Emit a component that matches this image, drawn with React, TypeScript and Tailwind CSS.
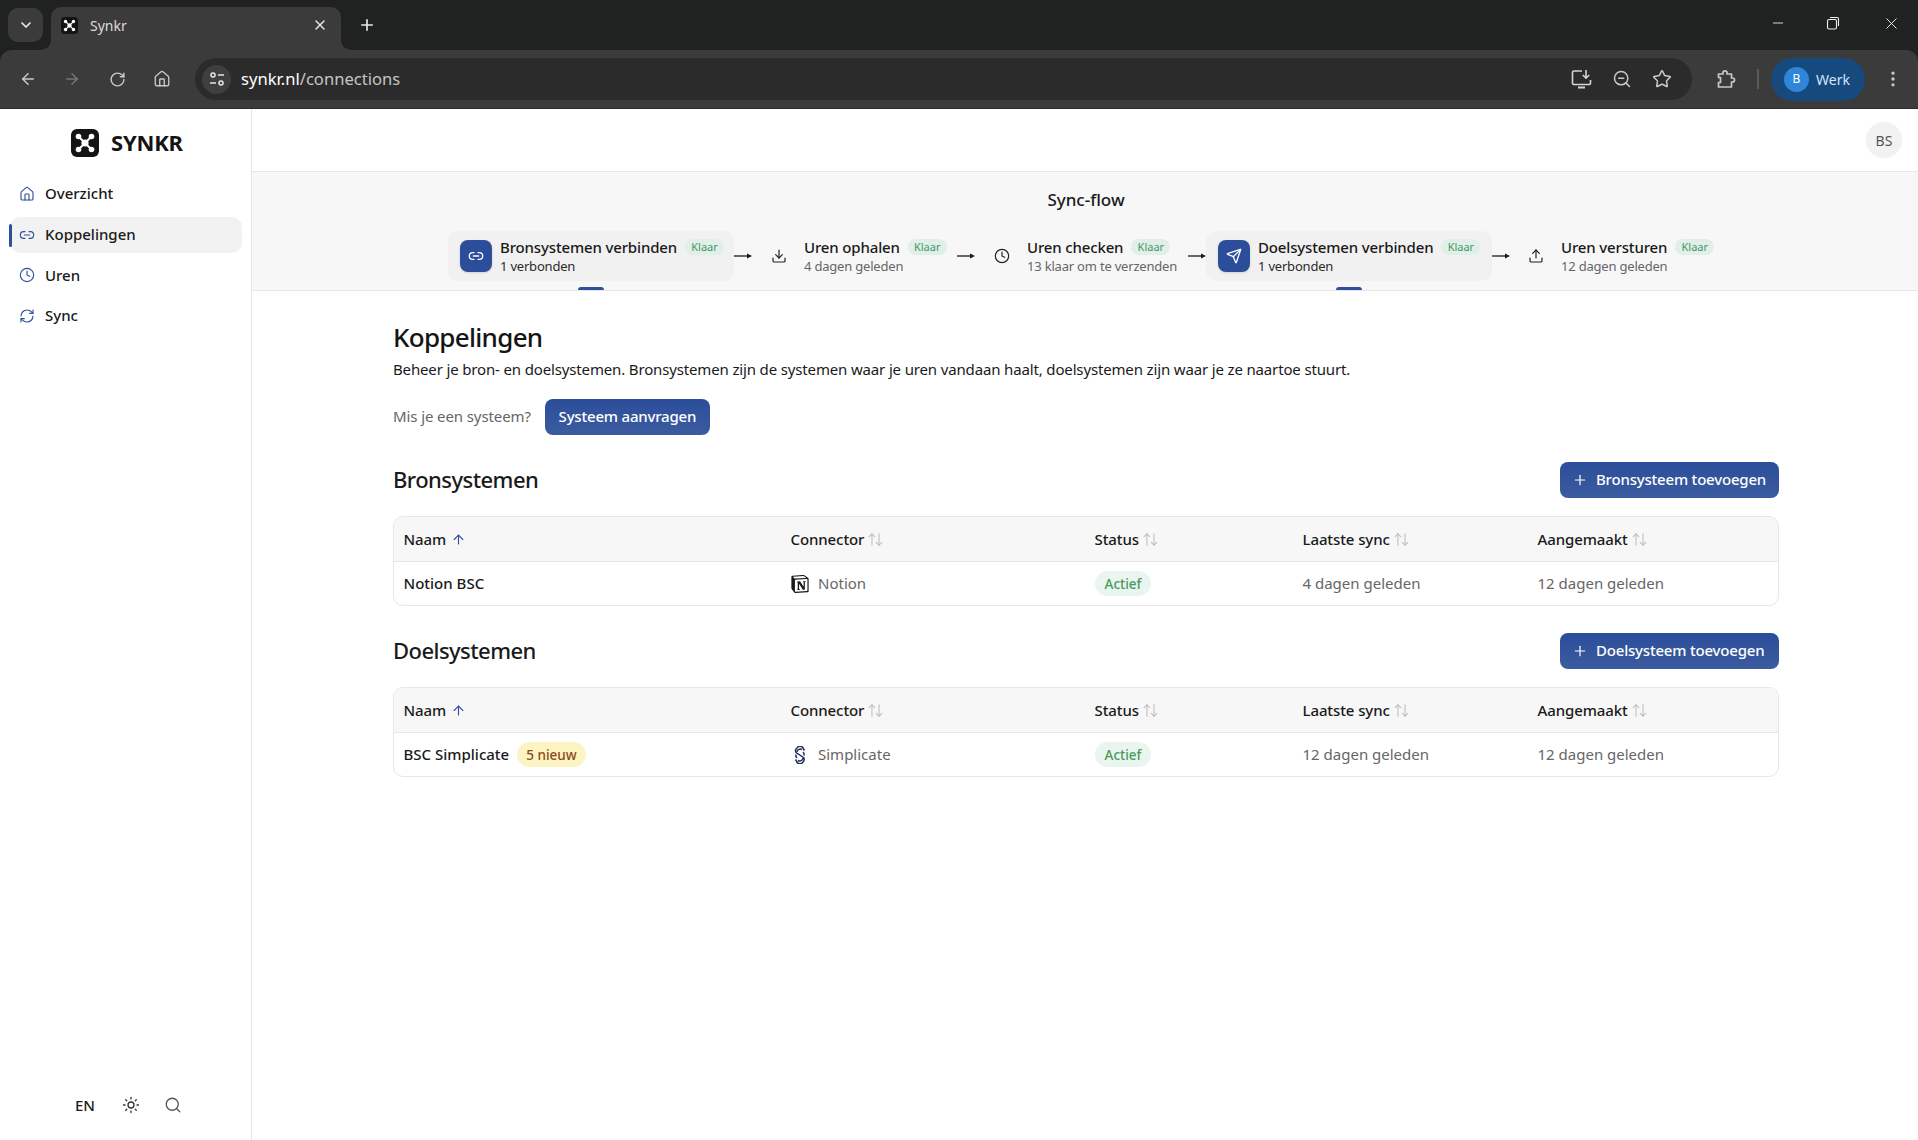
import React from "react";
import { ArrowUp, ArrowUpDown, Clock, Download, House, Link2, Plus, RefreshCw, Search, Send, Sun, Upload, X, ChevronDown, ArrowLeft, ArrowRight, RotateCw, Star, ZoomOut, EllipsisVertical, Minus } from "lucide-react";
import { SiNotion } from "react-icons/si";

function Logo({ size }: { size: number }) {
  return (
    <svg width={size} height={size} viewBox="0 0 28 28">
      <rect width="28" height="28" rx="6" fill="#141414" />
      <g stroke="#fff" strokeWidth="2">
        <line x1="8" y1="8" x2="20" y2="20" />
        <line x1="20" y1="8" x2="8" y2="20" />
      </g>
      <circle cx="7.5" cy="7.5" r="2.8" fill="#fff" />
      <circle cx="20.5" cy="7.5" r="2.8" fill="#fff" />
      <circle cx="7.5" cy="20.5" r="2.8" fill="#fff" />
      <circle cx="20.5" cy="20.5" r="2.8" fill="#fff" />
      <circle cx="14" cy="14" r="3.6" fill="#fff" />
    </svg>
  );
}

function TabFlare({ flip }: { flip?: boolean }) {
  return (
    <svg width="10" height="10" viewBox="0 0 10 10" className={flip ? "-scale-x-100" : ""}>
      <path d="M10 0 V10 H0 A10 10 0 0 0 10 0Z" fill="#3b3b3b" />
    </svg>
  );
}

function ChromeBar() {
  return (
    <div className="bg-[#202221] text-[#e8e8e8] shrink-0">
      <div className="h-[50px] flex items-end relative">
        <div className="w-[35px] h-[34px] ml-2 mb-2 rounded-[10px] bg-[#3b3b3b] flex items-center justify-center">
          <ChevronDown size={16} strokeWidth={2.6} />
        </div>
        <div className="flex items-end ml-[-2px]">
          <TabFlare />
          <div className="w-[290px] h-[43px] bg-[#3b3b3b] rounded-t-[10px] flex items-center pl-[10px] pr-[13px] pb-[7px]">
            <Logo size={17} />
            <span className="ml-3 text-[14px] text-[#dcdcdc]">Synkr</span>
            <X size={16} strokeWidth={2.2} className="ml-auto" />
          </div>
          <TabFlare flip />
        </div>
        <div className="ml-[7px] h-[34px] mb-2 flex items-center">
          <Plus size={18} strokeWidth={2.2} />
        </div>
        <div className="ml-auto flex items-center h-[46px] self-start text-[#f0f0f0]">
          <Minus size={16} strokeWidth={1.3} className="mr-[40px]" />
          <svg width="14" height="14" viewBox="0 0 14 14" fill="none" stroke="currentColor" strokeWidth="1.1" className="mr-[42px]">
            <rect x="1.5" y="3.5" width="9" height="9.5" rx="1.5" />
            <path d="M4 1.5 H11 A1.5 1.5 0 0 1 12.5 3 V10" />
          </svg>
          <X size={19} strokeWidth={1.2} className="mr-[17px]" />
        </div>
      </div>
      <div className="h-[59px] bg-[#3b3b3b] rounded-t-[12px] border-b border-[#2a2a2a] flex items-center pl-[19px] text-[#c9c9c9]">
        <ArrowLeft size={18} strokeWidth={2} />
        <ArrowRight size={18} strokeWidth={2} className="ml-[26px] text-[#7d7178]" />
        <RotateCw size={17} strokeWidth={2} className="ml-[28px]" />
        <House size={18} strokeWidth={1.8} className="ml-[27px]" />
        <div className="ml-[24px] w-[1497px] h-[42px] rounded-full bg-[#2b2b2b] flex items-center pl-[7px] pr-[20px]">
          <div className="w-[29px] h-[29px] rounded-full bg-[#3f3f3f] flex items-center justify-center">
            <svg width="16" height="16" viewBox="0 0 16 16" fill="none" stroke="#e8e8e8" strokeWidth="1.5">
              <circle cx="4" cy="4" r="2" />
              <line x1="9" y1="4" x2="15" y2="4" />
              <line x1="1" y1="12" x2="7" y2="12" />
              <circle cx="12" cy="12" r="2" />
            </svg>
          </div>
          <span className="ml-[10px] text-[16.6px] text-[#c4c4c4]">
            <span className="text-white">synkr.nl</span>/connections
          </span>
          <div className="ml-auto flex items-center gap-[20px]">
            <svg width="21" height="20" viewBox="0 0 21 20" fill="none" stroke="#d4d4d4" strokeWidth="1.6">
              <path d="M11 2 H3 A1.5 1.5 0 0 0 1.5 3.5 V14 A1.5 1.5 0 0 0 3 15.5 H18 A1.5 1.5 0 0 0 19.5 14 V11" />
              <path d="M7 18.5 H14" strokeWidth="2" />
              <path d="M15 1 V9 M11.8 6 L15 9.2 L18.2 6" />
            </svg>
            <ZoomOut size={20} strokeWidth={1.8} />
            <Star size={20} strokeWidth={1.8} />
          </div>
        </div>
        <svg width="20" height="20" viewBox="0 0 20 20" fill="none" stroke="#c9c9c9" strokeWidth="1.7" strokeLinejoin="round" className="ml-[24px]">
          <path d="M2.5 5 H7 V3.8 A2 2 0 0 1 11 3.8 V5 H15.5 V9 H16.5 A2 2 0 0 1 16.5 13 H15.5 V18 H2.5 V13.5 H4.5 V8.5 H2.5 Z" />
        </svg>
        <div className="ml-[21px] w-[2px] h-[20px] bg-[#5a5a5a]" />
        <div className="ml-[12px] w-[94px] h-[43px] rounded-full bg-[#16497e] flex items-center pl-[13px]">
          <div className="w-[25px] h-[25px] rounded-full bg-[#2f86d8] flex items-center justify-center text-[12px] text-white">B</div>
          <span className="ml-[7px] text-[14px] text-[#cfe6fb]">Werk</span>
        </div>
        <EllipsisVertical size={20} strokeWidth={2} className="ml-[18px]" />
      </div>
    </div>
  );
}

function NavItem({ icon, label, active }: { icon: React.ReactNode; label: string; active?: boolean }) {
  return (
    <div className={`relative mx-[10px] w-[232px] h-9 rounded-[10px] flex items-center pl-[9px] gap-[10px] text-[15px] font-medium text-[#1a1a1a] ${active ? "bg-[#f2f2f2]" : ""}`}>
      {active && <div className="absolute left-[-1px] top-[7px] w-[2.5px] h-[23px] rounded-full bg-[#2f4f9b]" />}
      <span className="text-[#2f4f9b] flex">{icon}</span>
      <span className="pb-[1px]">{label}</span>
    </div>
  );
}

function Sidebar() {
  return (
    <aside className="w-[252px] shrink-0 border-r border-[#e6e6e6] flex flex-col">
      <div className="h-[67px] pl-[71px] flex items-center gap-3 shrink-0">
        <Logo size={28} />
        <span className="text-[22px] font-bold text-[#141414] tracking-[-0.2px] pb-[1px]">SYNKR</span>
      </div>
      <nav className="flex flex-col gap-[4.7px]">
        <NavItem icon={<House size={16} strokeWidth={1.7} />} label="Overzicht" />
        <NavItem icon={<Link2 size={16} strokeWidth={1.7} />} label="Koppelingen" active />
        <NavItem icon={<Clock size={16} strokeWidth={1.7} />} label="Uren" />
        <NavItem icon={<RefreshCw size={16} strokeWidth={1.7} />} label="Sync" />
      </nav>
      <div className="mt-auto mb-[24px] pl-[75px] flex items-center text-[#1a1a1a]">
        <span className="text-[15px] font-medium">EN</span>
        <Sun size={18} strokeWidth={1.7} className="ml-[27px] text-[#333]" />
        <Search size={18} strokeWidth={1.7} className="ml-[24px] text-[#555]" />
      </div>
    </aside>
  );
}

function Step({ icon, title, sub, active, box }: { icon: React.ReactNode; title: string; sub: string; active?: boolean; box: string }) {
  return (
    <div className={`relative ${box} h-[50px] shrink-0 rounded-[10px] flex items-center ${active ? "bg-[#f1f1f1] gap-[8px]" : "gap-[9px]"}`}>
      <div className={`w-8 h-8 shrink-0 flex items-center justify-center rounded-lg ${active ? "bg-[#2b4d9a] text-white shadow-sm" : "text-[#222]"}`}>{icon}</div>
      <div className="min-w-0 whitespace-nowrap">
        <div className="flex items-center h-[20px]">
          <span className="text-[15px] leading-[20px] font-medium text-[#1a1a1a] tracking-[-0.15px]">{title}</span>
          <span className="ml-2 h-4 w-[39px] text-center rounded-full bg-[#e2efe9] text-[#3f9a66] text-[11px] leading-4">Klaar</span>
        </div>
        <div className={`text-[13px] leading-[18px] tracking-[-0.2px] ${active ? "text-[#2a2a2a]" : "text-[#666]"}`}>{sub}</div>
      </div>
      {active && <div className="absolute left-[130px] bottom-[-9px] w-[26px] h-[3px] rounded-t-sm bg-[#2f4f9b]" />}
    </div>
  );
}

function FlowArrow() {
  return (
    <svg width="18" height="8" viewBox="0 0 18 8" className="shrink-0">
      <line x1="0" y1="4" x2="14" y2="4" stroke="#1a1a1a" strokeWidth="1.3" />
      <path d="M13 1.5 L18 4 L13 6.5Z" fill="#1a1a1a" />
    </svg>
  );
}

function SyncFlow() {
  return (
    <section className="h-[119px] bg-[#f7f7f7] border-b border-[#e6e6e6] shrink-0">
      <h2 className="pt-[16px] h-[59px] text-center pl-[2px] text-[17px] leading-[24px] font-medium text-[#1a1a1a]">Sync-flow</h2>
      <div className="flex items-center justify-center pl-[3px]">
        <Step active box="w-[286px] pl-3" icon={<Link2 size={16} strokeWidth={2} />} title="Bronsystemen verbinden" sub="1 verbonden" />
        <FlowArrow />
        <Step box="w-[205px] pl-[11px]" icon={<Download size={16} strokeWidth={1.8} />} title="Uren ophalen" sub="4 dagen geleden" />
        <FlowArrow />
        <Step box="w-[213px] pl-[11px]" icon={<Clock size={16} strokeWidth={1.8} />} title="Uren checken" sub="13 klaar om te verzenden" />
        <FlowArrow />
        <Step active box="w-[286px] pl-3" icon={<Send size={16} strokeWidth={2} />} title="Doelsystemen verbinden" sub="1 verbonden" />
        <FlowArrow />
        <Step box="w-[215px] pl-[10px]" icon={<Upload size={16} strokeWidth={1.8} />} title="Uren versturen" sub="12 dagen geleden" />
      </div>
    </section>
  );
}

const cols = "grid grid-cols-[387px_304px_208px_235px_250px] items-center";

function Head({ label, sorted }: { label: string; sorted?: boolean }) {
  return (
    <div className="pl-[9.5px] flex items-center gap-[3px] text-[15px] font-medium text-[#1a1a1a] tracking-[-0.1px]">
      <span>{label}</span>
      {sorted ? <ArrowUp size={15} strokeWidth={1.8} className="ml-[2px] text-[#2f4f9b]" /> : <ArrowUpDown size={17} strokeWidth={1.5} className="text-[#bdbdbd]" />}
    </div>
  );
}

function SimplicateIcon() {
  return (
    <svg width="14" height="18" viewBox="0 0 14 18" fill="none" stroke="#1f2d5c" strokeWidth="1.5">
      <path d="M11.5 4.5 L10.5 3 A3.5 3.5 0 0 0 4 2 A3.5 3.5 0 0 0 3 6.5 L10.5 11.5 A3.5 3.5 0 0 1 10 16 A3.5 3.5 0 0 1 3.5 15 L2.5 13.5" />
      <path d="M4 6 A3.3 3.3 0 0 1 9 3.5 M3 8.5 A3.5 3.5 0 0 0 4 12 M11 9.5 A3.5 3.5 0 0 0 10 6 M10 12 A3.3 3.3 0 0 1 5 14.5" />
    </svg>
  );
}

function SystemSection({ title, add, name, badge, icon, connector, last }: { title: string; add: string; name: string; badge?: string; icon: React.ReactNode; connector: string; last: string }) {
  return (
    <section className="mt-[27px]">
      <div className="flex items-center justify-between h-9">
        <h2 className="text-[22px] font-medium text-[#1a1a1a] tracking-[-0.55px] pb-[2px]">{title}</h2>
        <button className="h-9 w-[219px] rounded-lg bg-gradient-to-b from-[#2b4d9a] to-[#3c5c9f] text-white text-[15px] font-medium tracking-[-0.2px] flex items-center pl-[12px]">
          <Plus size={16} strokeWidth={1.8} />
          <span className="ml-[8px] pb-[2px]">{add}</span>
        </button>
      </div>
      <div className="mt-[18px] border border-[#e6e6e6] rounded-[10px] overflow-hidden">
        <div className={`${cols} h-[45px] bg-[#f7f7f7] border-b border-[#e6e6e6]`}>
          <Head label="Naam" sorted />
          <Head label="Connector" />
          <Head label="Status" />
          <Head label="Laatste sync" />
          <Head label="Aangemaakt" />
        </div>
        <div className={`${cols} h-[43px] text-[15px] text-[#666]`}>
          <div className="pl-[9.5px] flex items-center gap-2">
            <span className="font-medium text-[#1a1a1a]">{name}</span>
            {badge && <span className="h-[25px] px-[9px] rounded-full bg-[#fdf4c4] text-[#8a4a14] text-[13.5px] font-medium leading-[26px]">{badge}</span>}
          </div>
          <div className="pl-[10px] flex items-center">
            <span className="w-[18px] flex justify-center text-[#1a1a1a]">{icon}</span>
            <span className="ml-[9px]">{connector}</span>
          </div>
          <div className="pl-[10px]">
            <span className="inline-block h-[25px] w-[56px] text-center rounded-full bg-[#e9f5ee] text-[#4a9a5e] text-[13.5px] font-medium leading-[26px]">Actief</span>
          </div>
          <div className="pl-[9.5px]">{last}</div>
          <div className="pl-[9.5px]">12 dagen geleden</div>
        </div>
      </div>
    </section>
  );
}

export default function App() {
  return (
    <div className="w-[1918px] h-[1140px] flex flex-col overflow-hidden bg-white font-['Noto_Sans',sans-serif]">
      <ChromeBar />
      <div className="flex-1 flex min-h-0">
        <Sidebar />
        <main className="flex-1 min-w-0 flex flex-col">
          <div className="h-[63px] shrink-0 border-b border-[#e6e6e6] flex items-start justify-end pt-[13px] pr-[16px]">
            <div className="w-9 h-9 rounded-full bg-[#f2f2f2] flex items-center justify-center text-[14px] text-[#555]">BS</div>
          </div>
          <SyncFlow />
          <div className="w-[1386px] ml-[141px] pt-[28px]">
            <h1 className="text-[26px] leading-[36px] font-medium text-[#141414] tracking-[-0.7px]">Koppelingen</h1>
            <p className="mt-[2px] text-[15px] leading-[24px] text-[#1a1a1a] tracking-[-0.15px]">Beheer je bron- en doelsystemen. Bronsystemen zijn de systemen waar je uren vandaan haalt, doelsystemen zijn waar je ze naartoe stuurt.</p>
            <div className="mt-[18px] flex items-center">
              <span className="text-[15px] text-[#666] tracking-[-0.1px] pb-[2px]">Mis je een systeem?</span>
              <button className="ml-[14px] h-9 w-[165px] pb-[1px] rounded-lg bg-gradient-to-b from-[#2b4d9a] to-[#3c5c9f] text-white text-[15px] font-medium tracking-[-0.2px]">Systeem aanvragen</button>
            </div>
            <SystemSection title="Bronsystemen" add="Bronsysteem toevoegen" name="Notion BSC" icon={<SiNotion size={18} />} connector="Notion" last="4 dagen geleden" />
            <SystemSection title="Doelsystemen" add="Doelsysteem toevoegen" name="BSC Simplicate" badge="5 nieuw" icon={<SimplicateIcon />} connector="Simplicate" last="12 dagen geleden" />
          </div>
        </main>
      </div>
    </div>
  );
}
